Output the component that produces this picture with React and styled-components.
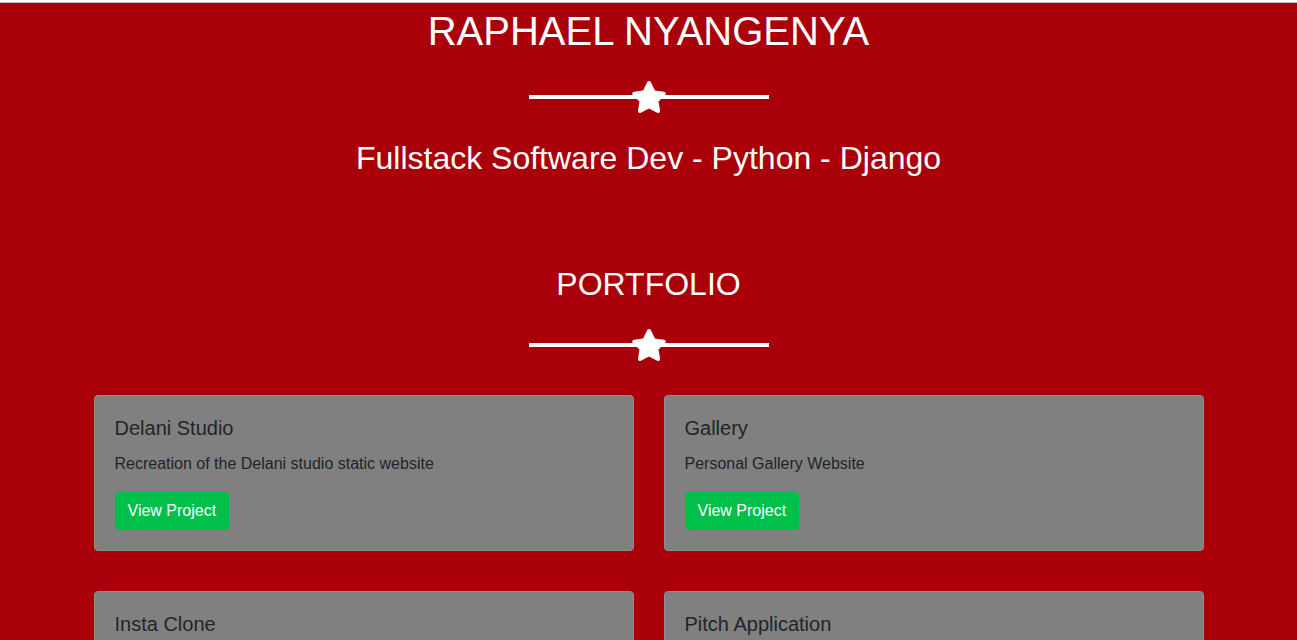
import styled, {createGlobalStyle} from 'styled-components'
import {FaStar} from 'react-icons/fa'

const GlobalStyle = createGlobalStyle`
  * {
    box-sizing: border-box;
  }
  body {
    margin: 0;
    background-color: #aa0009;
    font-family: "Liberation Sans", Arial, Helvetica, sans-serif;
    color: #212529;
  }
`

const TopEdge = styled.div`
  height: 3px;
  background-color: white;
  border-bottom: 1px solid #bdbdbd;
`

const Masthead = styled.header`
  display: flex;
  flex-direction: column;
  align-items: center;
  padding-top: 4px;
  color: white;
`

const Name = styled.h1`
  margin: 0;
  font-size: 40px;
  font-weight: 400;
  line-height: 1.2;
`

const Tagline = styled.h2`
  margin: 22px 0 0 0;
  font-size: 32px;
  font-weight: 400;
  line-height: 1.2;
`

const Divider = styled.div`
  display: flex;
  justify-content: center;
  align-items: center;
  width: 240px;
  height: 40px;
  margin-top: ${props => props.top || '22px'};
  background: linear-gradient(white, white) center / 100% 4px no-repeat;
  color: white;

  svg {
    width: 36px;
    height: 32px;
  }
`

const Section = styled.section`
  display: flex;
  flex-direction: column;
  align-items: center;
  padding-top: 88px;
  color: white;
`

const SectionTitle = styled.h2`
  margin: 0;
  font-size: 32px;
  font-weight: 400;
  line-height: 1.2;
`

const Grid = styled.div`
  display: grid;
  grid-template-columns: repeat(2, 540px);
  column-gap: 30px;
  row-gap: 40px;
  margin-top: 30px;
  padding-bottom: 40px;
`

const Card = styled.div`
  background-color: #808080;
  border: 1px solid #8e8e8e;
  border-radius: 4px;
  padding: 20px;
  color: #212529;
`

const CardTitle = styled.h5`
  margin: 0 0 12px 0;
  font-size: 20px;
  font-weight: 400;
  line-height: 1.2;
`

const CardText = styled.p`
  margin: 0 0 16px 0;
  font-size: 16px;
  line-height: 1.5;
`

const Button = styled.a`
  display: inline-block;
  padding: 6px 12px;
  font-size: 16px;
  line-height: 1.5;
  color: white;
  background-color: #00bf4b;
  border: 1px solid #00bf4b;
  border-radius: 4px;
  text-decoration: none;
  cursor: pointer;
`

const projects = [
    {title: 'Delani Studio', text: 'Recreation of the Delani studio static website'},
    {title: 'Gallery', text: 'Personal Gallery Website'},
    {title: 'Insta Clone', text: 'Instagram clone built with Django'},
    {title: 'Pitch Application', text: 'One minute pitch application built with Flask'},
]

function App() {
    return (
        <>
            <GlobalStyle/>
            <TopEdge/>
            <Masthead>
                <Name>RAPHAEL NYANGENYA</Name>
                <Divider><FaStar/></Divider>
                <Tagline>Fullstack Software Dev - Python - Django</Tagline>
            </Masthead>
            <Section>
                <SectionTitle>PORTFOLIO</SectionTitle>
                <Divider top='21px'><FaStar/></Divider>
                <Grid>
                    {projects.map(p => (
                        <Card key={p.title}>
                            <CardTitle>{p.title}</CardTitle>
                            <CardText>{p.text}</CardText>
                            <Button>View Project</Button>
                        </Card>
                    ))}
                </Grid>
            </Section>
        </>
    )
}

export default App
